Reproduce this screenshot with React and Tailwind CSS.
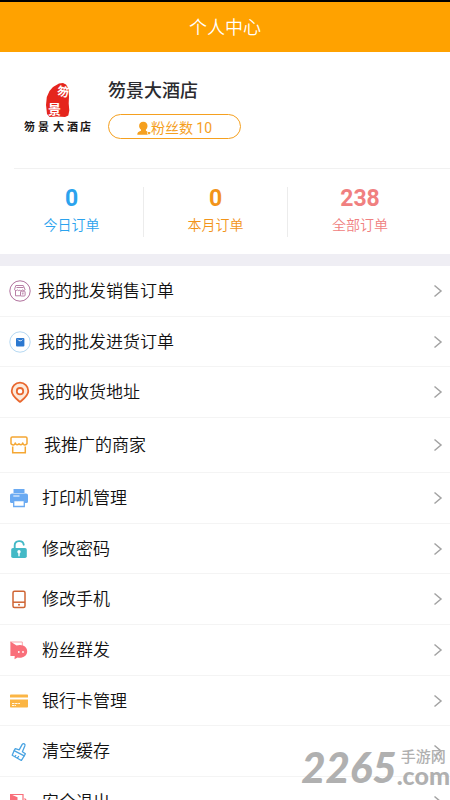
const ChevronRight = () => (
  <svg width="10" height="14" viewBox="0 0 10 14" className="shrink-0" aria-hidden="true">
    <path d="M1.5 1.5 8 7l-6.5 5.5" fill="none" stroke="#a3a3a3" strokeWidth="1.5" />
  </svg>
);

const SalesIcon = () => (
  <svg width="22" height="22" viewBox="0 0 22 22" fill="none" stroke="#b0709c" aria-hidden="true">
    <circle cx="11" cy="11" r="10.2" strokeWidth="1" />
    <path d="M6.8 5.5h7.5l1.7 4c0 1-1.8 1.4-2.4.4-.6 1-2 1-2.6 0-.6 1-2 1-2.6 0-.8 1-2.9.6-2.9-.4z" strokeWidth=".9" />
    <path d="M6.500 10.500v5.300h5.200M7.500 7.500h7" strokeWidth=".9" />
    <rect x="11.5" y="11.2" width="4.6" height="4.8" rx=".8" strokeWidth=".9" />
    <path d="M12.8 13h2M13.8 13v1.8" strokeWidth=".7" />
  </svg>
);

const PurchaseIcon = () => (
  <svg width="22" height="22" viewBox="0 0 22 22" aria-hidden="true">
    <circle cx="11" cy="11" r="10.2" fill="none" stroke="#b5d8f2" strokeWidth="1" />
    <rect x="7" y="7" width="8.4" height="8.4" rx="1" fill="#2b78d0" />
    <path d="M9 8.6c.5 1.6 3.9 1.6 4.4 0" fill="none" stroke="#fff" strokeWidth=".9" />
  </svg>
);

const AddressIcon = () => (
  <svg width="22" height="22" viewBox="0 0 22 22" aria-hidden="true">
    <path
      d="M11 1.7a8.3 8.3 0 0 0-8.3 8.3c0 4.7 4.5 7.7 8.3 10.9 3.8-3.2 8.3-6.2 8.3-10.9A8.3 8.3 0 0 0 11 1.7z"
      fill="#fdeadb"
      stroke="#e9682f"
      strokeWidth="1.8"
    />
    <circle cx="11" cy="10.2" r="3.2" fill="#fff" stroke="#e9682f" strokeWidth="1.8" />
  </svg>
);

const ShopIcon = () => (
  <svg width="20" height="20" viewBox="0 0 20 20" fill="none" stroke="#f5a733" strokeWidth="1.5" aria-hidden="true">
    <path d="M3.3 2h13.4c.8 0 1.3.5 1.3 1.3v5.5c-1.3 1.7-3.8 1.5-4.3-.8-.8 2.3-2.2 2.3-3.7.9-1.5 1.4-2.9 1.4-3.7-.9-.5 2.3-3 2.5-4.300.8V3.300C2 2.500 2.500 2 3.300 2z" strokeLinejoin="round" />
    <path d="M3.7 11.5v6.3h12.6v-6.3" />
  </svg>
);

const PrinterIcon = () => (
  <svg width="20" height="20" viewBox="0 0 20 20" aria-hidden="true">
    <path d="M4.5 1h11v4h-11z" fill="#6aaaf2" />
    <path d="M3 5.5h14c1.300 0 2 .7 2 2v6.300c0 .7-.5 1.200-1.200 1.200H2.200c-.7 0-1.200-.5-1.200-1.200V7.500c0-1.300.7-2 2-2z" fill="#6aaaf2" />
    <path d="M4.3 8h6.2" stroke="#fff" strokeWidth="1" />
    <path d="M4.7 12.5h10.6v6H4.700z" fill="#fff" stroke="#6aaaf2" strokeWidth="1.3" />
  </svg>
);

const LockIcon = () => (
  <svg width="20" height="20" viewBox="0 0 20 20" aria-hidden="true">
    <path d="M5.7 9V6.300c0-5.300 8.300-5.700 9-.6" fill="none" stroke="#43b9c6" strokeWidth="1.9" strokeLinecap="round" />
    <rect x="2.2" y="9" width="15.6" height="10" rx="1.8" fill="#43b9c6" />
    <circle cx="10" cy="12.8" r="1.7" fill="#fff" />
    <path d="M10 13v3.7" stroke="#fff" strokeWidth="1.4" strokeLinecap="round" />
  </svg>
);

const PhoneIcon = () => (
  <svg width="20" height="20" viewBox="0 0 20 20" fill="none" stroke="#cf6534" strokeWidth="1.5" aria-hidden="true">
    <rect x="4" y="2.2" width="12" height="16.2" rx="1.5" />
    <path d="M4 13.2h12" />
    <circle cx="10" cy="15.8" r="1" fill="#cf6534" stroke="none" />
  </svg>
);

const MessageIcon = () => (
  <svg width="20" height="20" viewBox="0 0 20 20" aria-hidden="true">
    <path d="M1.5 2h11.800v6" fill="none" stroke="#f9a5aa" strokeWidth="1" />
    <path
      d="M1.4 1.500 7.500 5.500c6-1.900 10.700 1.300 10.700 5.700 0 5-4.900 7.300-9.600 6.300L5.500 19.200 5.700 16H1.400z"
      fill="#f96f7a"
    />
    <circle cx="9.8" cy="12" r=".9" fill="#fff" />
    <circle cx="14" cy="12" r=".9" fill="#fff" />
  </svg>
);

const CardIcon = () => (
  <svg width="20" height="20" viewBox="0 0 20 20" aria-hidden="true">
    <path d="M2 3.500h16c.6 0 1 .4 1 1v2H1v-2c0-.6.4-1 1-1zM1 8.500h18v7c0 .6-.4 1-1 1H2c-.6 0-1-.4-1-1z" fill="#fbb544" />
    <path d="M3 12.500h8M3 14.500h4" stroke="#fff" strokeWidth=".9" strokeDasharray="2.5 .6" />
  </svg>
);

const BrushIcon = () => (
  <svg width="20" height="20" viewBox="0 0 20 20" fill="none" stroke="#4ba4e2" strokeWidth="1.3" strokeLinejoin="round" aria-hidden="true">
    <path d="m6.300 7.700 3.900 1.200 3-5.500c1.200-1.500 3.300-.4 2.700 1.400l-2.500 5.900 3 2-1.200 2.200-10.100-5.200z" />
    <path d="M5.100 9.700 3.200 14.300l9.200 5.200 2.800-4.600M8.500 17l1.300-2M6 15.700l1-1.500" />
  </svg>
);

const ExitIcon = () => (
  <svg width="20" height="20" viewBox="0 0 20 20" aria-hidden="true">
    <path d="M1 2.500h13V8M14 13v5H8" fill="none" stroke="#f96f7a" strokeWidth="1.2" />
    <path d="m1 2 7.500 3.300V19L1 16z" fill="#f96f7a" />
    <path d="M10.500 9.800h8M15.500 6.500l3 3.300-3 3.200" fill="none" stroke="#f96f7a" strokeWidth="1.2" />
  </svg>
);

const FansIcon = () => (
  <svg width="14" height="14" viewBox="0 0 14 14" fill="#f5a01f" aria-hidden="true">
    <path d="M6.300.8c2.700 0 4.200 1.900 4.200 4.200 0 1.600-.7 2.800-1.600 3.600v1.200l1.500.7c-.9 1.100-.4 2.300.5 3.200H.3c0-2.300.9-3.200 3.700-4V8.600C2.900 7.800 2.100 6.600 2.100 5 2.100 2.700 3.600.8 6.300.8z" />
    <path d="M12 13.500c-2.800-1.700-1.200-3.300 0-2.200 1.200-1.100 2.800.5 0 2.200z" />
  </svg>
);

const HotelLogo = () => (
  <svg width="72" height="60" viewBox="0 0 72 60" role="img" aria-label="笏景大酒店" className="shrink-0 font-['Noto_Sans_CJK_SC',sans-serif]">
    <path
      d="M29 4 35 .5l4-.5 3 1.500 2.500 4 .5 8-.3 7 .6 7-1 5-3.300 1.500-8-.5-7.500.5-2.500-3-1-9 .8-8 2.700-6z"
      fill="#e5251d"
    />
    <g fill="#fff" fontWeight="700">
      <text x="33" y="13" fontSize="12" transform="rotate(10 38 10)">笏</text>
      <text x="24" y="31" fontSize="13">景</text>
    </g>
    <g fill="#1c1818" fontWeight="700" fontSize="11">
      <text x="0 14 29 43 56" y="48">笏景大酒店</text>
    </g>
  </svg>
);

const stats = [
  { value: 0, label: "今日订单", color: "text-[#2ba3ee]" },
  { value: 0, label: "本月订单", color: "text-[#f2941a]" },
  { value: 238, label: "全部订单", color: "text-[#f08080]" },
];

const menuItems = [
  { label: "我的批发销售订单", Icon: SalesIcon, gap: "gap-[7px]", height: "h-[51px]" },
  { label: "我的批发进货订单", Icon: PurchaseIcon, gap: "gap-[7px]", height: "h-[50px]" },
  { label: "我的收货地址", Icon: AddressIcon, gap: "gap-[7px]", height: "h-[51px]" },
  { label: "我推广的商家", Icon: ShopIcon, gap: "gap-[15px]", height: "h-[55px]" },
  { label: "打印机管理", Icon: PrinterIcon, gap: "gap-[13px]", height: "h-[51px]" },
  { label: "修改密码", Icon: LockIcon, gap: "gap-[13px]", height: "h-[50px]" },
  { label: "修改手机", Icon: PhoneIcon, gap: "gap-[13px]", height: "h-[51px]" },
  { label: "粉丝群发", Icon: MessageIcon, gap: "gap-[13px]", height: "h-[51px]" },
  { label: "银行卡管理", Icon: CardIcon, gap: "gap-[13px]", height: "h-[50px]" },
  { label: "清空缓存", Icon: BrushIcon, gap: "gap-[13px]", height: "h-[51px]" },
  { label: "安全退出", Icon: ExitIcon, gap: "gap-[13px]", height: "h-[51px]" },
];

const Watermark = () => (
  <div className="pointer-events-none absolute right-0 bottom-[15px] flex items-end text-[#b0b0b0]">
    <span className="font-['Lato'] text-[42px] leading-9 font-black italic">2265</span>
    <span className="flex flex-col items-center">
      <span className="text-[15px] leading-4 font-medium">手游网</span>
      <span className="font-['Lato'] text-[25px] leading-5 font-black">.com</span>
    </span>
  </div>
);

const App = () => {
  return (
    <div className="relative h-screen overflow-hidden bg-white font-['Roboto','Noto_Sans_CJK_SC',sans-serif]">
      <header className="flex h-[52px] items-center justify-center border-t-2 border-black bg-[#ffa200] pt-0.5">
        <h1 className="text-lg font-[350] text-white">个人中心</h1>
      </header>

      <section className="flex h-[116px] gap-3 pt-[27px] pl-6">
        <div className="pt-1">
          <HotelLogo />
        </div>
        <div>
          <h2 className="text-lg leading-6 font-medium text-[#2b2b2f]">笏景大酒店</h2>
          <button
            type="button"
            className="mt-[11px] flex h-[25px] w-[133px] items-center justify-center rounded-full border border-[#f5a01f] pt-0.5 text-sm text-[#f5a01f]"
          >
            <FansIcon />
            粉丝数 10
          </button>
        </div>
      </section>

      <section className="ml-3.5 border-t border-[#f1f1f1]" />
      <section className="grid h-[85px] grid-cols-3 items-center pr-[18px]">
        {stats.map(({ value, label, color }) => (
          <div
            key={label}
            className={`flex h-[50px] flex-col items-center border-r border-[#ececec] last:border-r-0 ${color}`}
          >
            <span className="text-[23px] leading-6 font-bold">{value}</span>
            <span className="mt-1 text-sm leading-5 font-[350]">{label}</span>
          </div>
        ))}
      </section>

      <div className="h-3 bg-[#efeef4]" />

      <nav>
        {menuItems.map(({ label, Icon, gap, height }) => (
          <button
            key={label}
            type="button"
            className={`flex w-full items-center border-b border-[#f4f4f4] pr-[7px] pl-[9px] text-[17px] font-[350] text-[#111111] ${gap} ${height}`}
          >
            <Icon />
            <span className="flex-1 pt-0.5 text-left">{label}</span>
            <ChevronRight />
          </button>
        ))}
      </nav>

      <Watermark />
    </div>
  );
};

export default App;
